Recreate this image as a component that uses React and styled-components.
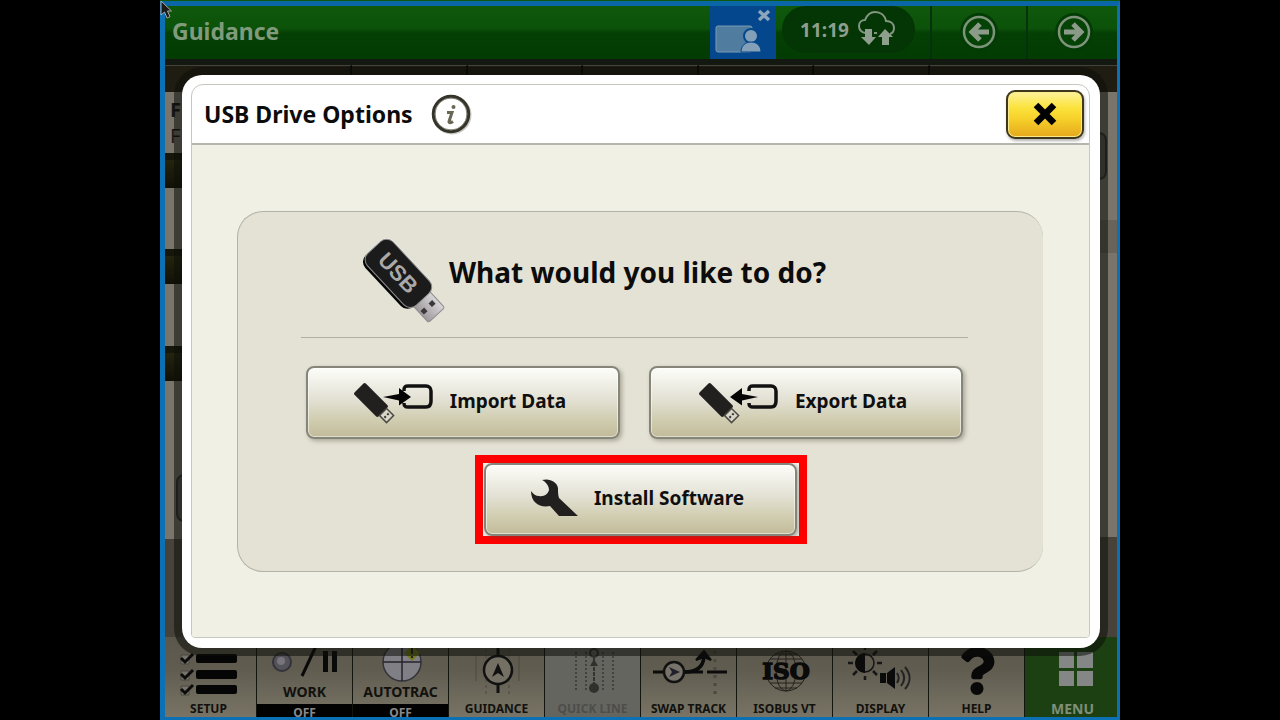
import React from 'react'
import styled, { createGlobalStyle } from 'styled-components'
import { FaQuestion } from 'react-icons/fa'

const GlobalStyle = createGlobalStyle`
    * {
        box-sizing: border-box;
    }

    body {
        margin: 0;
        background: #000;
        font-family: "Noto Sans", "Open Sans", sans-serif;
    }

    button {
        font-family: inherit;
        margin: 0;
        padding: 0;
        border: 0;
        background: none;
        color: inherit;
        cursor: pointer;
    }

    svg {
        display: block;
        flex: none;
    }
`;

/* icons */

const CursorIcon = () => (
    <svg width="14" height="20" viewBox="0 0 14 20">
        <path d="M1 1v14l3.500-3 2.500 6 3-1.300-2.500-5.700h4z" fill="#1a1a1a" stroke="#aaa" strokeWidth="1" />
    </svg>
)

const RemoteIcon = () => (
    <svg width="66" height="53" viewBox="0 0 66 53">
        <rect x="6" y="20" width="36" height="26" rx="2" fill="#4f7c9f" stroke="#7d9bb5" />
        <circle cx="41" cy="30" r="7" fill="#849fb8" stroke="#04478c" strokeWidth="2" />
        <path d="M31 46c0-6 4-10 10-10s10 4 10 10z" fill="#849fb8" stroke="#04478c" strokeWidth="1" />
        <path d="M49 5l10 9M59 5l-10 9" stroke="#8ba5bd" strokeWidth="3.500" />
    </svg>
)

const CloudIcon = () => (
    <svg width="40" height="38" viewBox="0 0 40 38">
        <path d="M8 22c-4-1-6-4-6-7 0-4 3-6 6-6 2-5 6-8 10-8 6 0 10 4 11 9 5 0 8 3 8 7 0 3-1 5-4 6M17 22h3" fill="none" stroke="#829680" strokeWidth="2" />
        <path d="M8 18h7v8h4l-7 8-8-8h4z" fill="#8f9f8d" />
        <path d="M25 34h7v-8h4l-8-8-7 8h4z" fill="#8f9f8d" />
    </svg>
)

const ArrowIcon = ({ flip }) => (
    <svg width="44" height="44" viewBox="0 0 44 44">
        <circle cx="22" cy="21" r="19" fill="#033b05" />
        <circle cx="22" cy="21" r="15" fill="#044205" stroke="#7d947b" strokeWidth="2.500" />
        <path d={flip ? "M12 21h17M21 13l8 8-8 8" : "M32 21h-17M23 13l-8 8 8 8"} fill="none" stroke="#8b9a89" strokeWidth="5" />
    </svg>
)

const InfoIcon = () => (
    <svg width="42" height="42" viewBox="0 0 42 42">
        <circle cx="22" cy="22" r="18" fill="none" stroke="#c9c9c4" strokeWidth="3" />
        <circle cx="21" cy="21" r="17.500" fill="#fff" stroke="#35342a" strokeWidth="3.500" />
        <circle cx="21" cy="21" r="16" fill="none" stroke="#8b887a" strokeWidth="1" />
        <circle cx="23.500" cy="14" r="2" fill="#6b6755" />
        <path d="M17 19.500h5l-3 9c0 1.500 2 1.500 4 0" fill="none" stroke="#6b6755" strokeWidth="3" />
    </svg>
)

const CrossIcon = () => (
    <svg width="24" height="24" viewBox="0 0 24 24">
        <path d="M3 3l18 18M21 3l-18 18" stroke="#000" strokeWidth="6.500" />
    </svg>
)

const UsbIcon = () => (
    <svg width="86" height="90" viewBox="0 0 86 90">
        <defs>
            <linearGradient id="plug" x1="0" y1="0" x2="0" y2="1">
                <stop offset="0" stopColor="#d9d6d9" />
                <stop offset="1" stopColor="#9d999d" />
            </linearGradient>
        </defs>
        <g transform="translate(36 37) rotate(47)">
            <rect x="34" y="-12" width="23" height="22" rx="2" fill="url(#plug)" stroke="#8e8a8e" />
            <rect x="43" y="-8" width="5" height="5" fill="#3a383a" />
            <rect x="43" y="3" width="5" height="5" fill="#3a383a" />
            <rect x="-35" y="-17" width="70" height="36" rx="9" fill="#050505" />
            <rect x="-36" y="-20" width="72" height="35" rx="10" fill="#f4f4f0" />
            <rect x="-35" y="-19" width="71" height="35" rx="9" fill="#1b1b1b" stroke="#8e8e8e" strokeWidth="1" />
            <text x="0" y="6" textAnchor="middle" fontFamily="Liberation Sans" fontWeight="700" fontSize="22" fill="#aaa8a8">USB</text>
        </g>
    </svg>
)

const TransferIcon = ({ out }) => (
    <svg width="80" height="46" viewBox="0 -4 80 46">
        <g transform="translate(17 18) rotate(45)">
            <rect x="-17" y="-8" width="34" height="16" rx="2" fill="#221f1f" />
            <path d="M17-5h10v10h-10z" fill="#d8d6c8" stroke="#4c4a45" strokeWidth="1.500" />
            <path d="M21-2h2M21 2h2" stroke="#333" strokeWidth="2" />
        </g>
        <path d="M50 9v-1c0-3 1-4 4-4h18c3 0 5 2 5 5v10c0 4-2 6-5 6h-18c-3 0-4-1-4-4" fill="none" stroke="#111" strokeWidth="3.500" />
        {out
            ? <path d="M31 15l12-9v6l16 3-16 3.500v5z" fill="#050505" />
            : <path d="M57 15l-12-9v6l-16 3 16 3.500v5z" fill="#050505" />}
    </svg>
)

const WrenchIcon = () => (
    <svg width="48" height="38" viewBox="0 0 48 38">
        <path d="M12 1C20-1 27 3 28 9C28 13 28 16 29 19L48 37H29L20 27C10 29 1 24 1 12C3 15 6 17 9 17C14 18 18 15 19 11C19 7 16 3 12 1z" fill="#221f1f" />
    </svg>
)

const SetupIcon = () => (
    <svg width="96" height="64" viewBox="0 0 96 64">
        {[17, 33, 48].map(y => (
            <g key={y}>
                <rect x="35" y={y} width="41" height="9" rx="2" fill="#050505" />
                <path d={`M20 ${y + 1}h8v9h-8z`} fill="#77736a" stroke="#4b483f" />
                <path d={`M20 ${y + 4}l4 4 8-8`} fill="none" stroke="#0c0c0c" strokeWidth="3" />
            </g>
        ))}
    </svg>
)

const WorkIcon = () => (
    <svg width="96" height="47" viewBox="0 0 96 47">
        <circle cx="25" cy="25" r="9" fill="#55535a" stroke="#34323a" strokeWidth="2" />
        <circle cx="24" cy="24" r="4" fill="#77757b" />
        <path d="M45 39l14-30" stroke="#090909" strokeWidth="3" />
        <path d="M66 14h5v21h-5zM75 14h5v21h-5z" fill="#090909" />
    </svg>
)

const AutotracIcon = () => (
    <svg width="96" height="47" viewBox="0 0 96 47">
        <circle cx="49" cy="25" r="19" fill="#807f86" stroke="#34343a" strokeWidth="1.500" />
        <path d="M49 6v38M30 25h38" stroke="#25252c" strokeWidth="1.500" />
        <path d="M59 8l8 8-8 8-8-8z" fill="#74781a" />
        <path d="M59 11v6M59 19v2" stroke="#222" strokeWidth="2" />
    </svg>
)

const GuidanceIcon = () => (
    <svg width="96" height="64" viewBox="0 0 96 64">
        <path d="M27 18v26M70 18v26" stroke="#4b483f" />
        <path d="M37 12v46M60 12v46" stroke="#4b483f" strokeDasharray="3 3" />
        <path d="M49 8v48" stroke="#111" strokeWidth="3" />
        <circle cx="49" cy="33" r="14" fill="#747064" stroke="#111" strokeWidth="2.500" />
        <path d="M49 26l6 14-6-4-6 4z" fill="#111" />
    </svg>
)

const QuickLineIcon = () => (
    <svg width="96" height="64" viewBox="0 0 96 64">
        <path d="M31 15v38M41 15v38M58 15v38M68 15v38" stroke="#42423e" strokeWidth="2" strokeDasharray="2 2" />
        <path d="M49 20v28" stroke="#35352f" strokeWidth="2" strokeDasharray="4 1" />
        <circle cx="49" cy="16" r="4" fill="none" stroke="#30302c" strokeWidth="2" />
        <path d="M49 22l4 7h-8z" fill="#30302c" />
        <circle cx="49" cy="51" r="5" fill="#30302c" />
    </svg>
)

const SwapTrackIcon = () => (
    <svg width="96" height="64" viewBox="0 0 96 64">
        <path d="M12 35h50M66 35h20" stroke="#0b0b0b" strokeWidth="3" />
        <path d="M44 35c11 0 18-5 19-15" fill="none" stroke="#0b0b0b" strokeWidth="3.500" />
        <path d="M55 23l8-9 7 9-7-3z" fill="#0b0b0b" stroke="#0b0b0b" strokeWidth="2" />
        <path d="M74 14v44" stroke="#4b483f" strokeWidth="3" strokeDasharray="3 5" />
        <circle cx="33" cy="35" r="10" fill="#77736a" stroke="#111" strokeWidth="2.500" />
        <path d="M28 30l11 5-11 5 3-5z" fill="#20202c" />
    </svg>
)

const IsoIcon = () => (
    <svg width="96" height="64" viewBox="0 0 96 64">
        <g fill="none" stroke="#24221d" strokeWidth="1">
            <circle cx="49" cy="34" r="20" />
            <ellipse cx="49" cy="34" rx="10" ry="20" />
            <path d="M49 14v40M33 22h32M33 46h32M38 17h22M38 51h22" />
        </g>
        <text x="49" y="42" textAnchor="middle" fontFamily="DejaVu Serif" fontWeight="700" fontSize="23" fill="#0a0a0a" stroke="#0a0a0a" strokeWidth="1.500">ISO</text>
    </svg>
)

const DisplayIcon = () => (
    <svg width="96" height="64" viewBox="0 0 96 64">
        <circle cx="32" cy="26" r="9" fill="none" stroke="#161616" strokeWidth="1.500" />
        <path d="M32 16a10 10 0 0 0 0 20z" fill="#0b0b0b" />
        <path d="M32 8v5M32 39v4M15 26h5M44 26h5M20 14l4 4M44 14l-4 4M20 38l4-4M44 38l-4-4" stroke="#161616" strokeWidth="2.500" />
        <path d="M47 36h6v10h-6zM54 36l8-6v22l-8-6z" fill="#0b0b0b" />
        <path d="M64 36c2 3 2 7 0 10M68 33c4 5 4 11 0 16M72 30c6 7 6 15 0 22" fill="none" stroke="#222" strokeWidth="2" />
    </svg>
)

const HelpIcon = () => (
    <svg width="96" height="64" viewBox="0 0 96 64">
        <FaQuestion x="24" y="10" size={48} color="#080808" />
    </svg>
)

const MenuIcon = () => (
    <svg width="96" height="64" viewBox="0 0 96 64">
        <path d="M34 15h15v16h-15zM52 15h16v16h-16zM34 34h15v15h-15zM52 34h16v15h-16z" fill="#858787" />
    </svg>
)

/* data */

const dockItems = [
    { label: 'SETUP', Icon: SetupIcon },
    { label: 'WORK', Icon: WorkIcon, status: 'OFF' },
    { label: 'AUTOTRAC', Icon: AutotracIcon, status: 'OFF' },
    { label: 'GUIDANCE', Icon: GuidanceIcon },
    { label: 'QUICK LINE', Icon: QuickLineIcon, disabled: true },
    { label: 'SWAP TRACK', Icon: SwapTrackIcon },
    { label: 'ISOBUS VT', Icon: IsoIcon },
    { label: 'DISPLAY', Icon: DisplayIcon },
    { label: 'HELP', Icon: HelpIcon },
    { label: 'MENU', Icon: MenuIcon, menu: true },
]

const DockItem = ({ item }) => {
    const { label, Icon, status, disabled, menu } = item

    return (
        <DockButton disabled={disabled} $menu={menu}>
            <Icon />
            <DockLabel $large={status || menu} $faded={disabled} $menu={menu}>{label}</DockLabel>
            {status && <DockStatus>{status}</DockStatus>}
        </DockButton>
    )
}

const OptionsDialog = () => (
    <Dialog role="dialog" aria-labelledby="dialog-title">
        <DialogInner>
            <DialogHeader>
                <DialogTitle id="dialog-title">USB Drive Options</DialogTitle>
                <button aria-label="Information"><InfoIcon /></button>
                <CloseButton aria-label="Close"><CrossIcon /></CloseButton>
            </DialogHeader>
            <DialogBody>
                <Panel>
                    <Question>
                        <UsbIcon />
                        <QuestionText>What would you like to do?</QuestionText>
                    </Question>
                    <ButtonRow>
                        <OptionButton><TransferIcon />Import Data</OptionButton>
                        <OptionButton><TransferIcon out />Export Data</OptionButton>
                    </ButtonRow>
                    <Highlight>
                        <OptionButton><WrenchIcon />Install Software</OptionButton>
                    </Highlight>
                </Panel>
            </DialogBody>
        </DialogInner>
    </Dialog>
)

const App = () => (
    <>
        <GlobalStyle />
        <Screen>
            <TopBar>
                <PageTitle>Guidance</PageTitle>
                <RemoteButton aria-label="Remote display"><RemoteIcon /></RemoteButton>
                <Clock>11:19<CloudIcon /></Clock>
                <NavButton aria-label="Back"><ArrowIcon /></NavButton>
                <NavButton aria-label="Forward"><ArrowIcon flip /></NavButton>
            </TopBar>
            <Workspace>
                <TabStrip>
                    <Tab /><Tab /><Tab /><Tab /><Tab /><Tab /><Tab />
                </TabStrip>
                <Columns>
                    <div>
                        <Card $size={61}><b>F</b><span>F</span></Card>
                        <Band />
                        <Card $size={61} />
                        <Band />
                        <Card $size={62} />
                        <Band />
                        <Card $size={158}><CardButton $side="left" /></Card>
                    </div>
                    <div>
                        <Card $size={128}><CardButton $side="right" /></Card>
                        <Band $light />
                        <Card $size={284} />
                    </div>
                </Columns>
            </Workspace>
            <Dock>
                {dockItems.map(item => <DockItem key={item.label} item={item} />)}
            </Dock>
            <OptionsDialog />
            <Pointer><CursorIcon /></Pointer>
        </Screen>
    </>
)

export default App

const Screen = styled.div`
    position: relative;
    display: flex;
    flex-direction: column;
    width: 75%;
    min-height: 100vh;
    margin: 0 auto;
    background: #47433a;
    overflow: hidden;

    &::after {
        content: "";
        position: absolute;
        inset: 1px 0 0;
        border: solid #0c70b4;
        border-width: 5px 3px 3px 5px;
        border-top-color: #0b66a6;
        pointer-events: none;
    }
`;

const TopBar = styled.header`
    display: grid;
    grid-template-columns: 1fr 66px 154px 96px 94px;
    height: 59px;
    padding-top: 6px;
    background: linear-gradient(#0f5a0c, #0c520a 48%, #043f04 56%, #033c03);
`;

const PageTitle = styled.h1`
    margin: 0;
    padding-left: 12px;
    font-size: 23px;
    line-height: 50px;
    color: #809b7b;
`;

const RemoteButton = styled.button`
    background: #04478c;
`;

const Clock = styled.div`
    display: flex;
    align-items: center;
    justify-content: center;
    gap: 8px;
    height: 47px;
    margin: 0 15px 0 6px;
    border-radius: 24px;
    background: #043505;
    font-size: 19px;
    font-weight: 700;
    color: #8f9f8d;
`;

const NavButton = styled.button`
    display: flex;
    align-items: center;
    justify-content: center;
    border-left: 2px solid #02330a;
`;

const Workspace = styled.main`
    flex: 1;
`;

const TabStrip = styled.div`
    display: grid;
    grid-template-columns: 192px 1fr 1fr 1fr 1fr 1fr 190px;
    height: 33px;
    padding-top: 6px;
    background: #131911;
`;

const Tab = styled.div`
    border-top: 1px solid #45433a;
    border-right: 2px solid #050704;
    background: #1f1d12;
`;

const Columns = styled.div`
    display: grid;
    grid-template-columns: 1fr 1fr;
`;

const Card = styled.section`
    display: flex;
    flex-direction: column;
    justify-content: center;
    height: ${props => props.$size}px;
    padding-left: 10px;
    background: #79756a;
    font-size: 20px;
    line-height: 26px;
    color: #161616;
`;

const CardButton = styled.div`
    align-self: ${props => props.$side === 'left' ? 'flex-start' : 'flex-end'};
    width: 80px;
    height: 48px;
    margin: ${props => props.$side === 'left' ? '76px 0 0 6px' : '0 13px 0 0'};
    border: 2px solid #333333;
    border-radius: 8px;
    background: #5b5953;
`;

const Band = styled.div`
    height: ${props => props.$light ? 33 : 35}px;
    border-top: ${props => props.$light ? 0 : 7}px solid #15170a;
    background: ${props => props.$light ? '#68645a' : 'linear-gradient(#25240e, #111006)'};
`;

const Dock = styled.nav`
    display: grid;
    grid-template-columns: repeat(10, 1fr);
    height: 83px;
`;

const DockButton = styled.button`
    display: flex;
    flex-direction: column;
    align-items: center;
    min-width: 0;
    overflow: hidden;
    border-left: 1px solid #15150f;
    background: ${props => props.$menu ? '#1d4012' : props.disabled ? '#656560' : 'linear-gradient(#5b574c, #605c50 40%, #7a7566)'};
`;

const DockLabel = styled.span`
    font-size: ${props => props.$large ? 14 : 12}px;
    font-weight: 700;
    line-height: 16px;
    white-space: nowrap;
    color: ${props => props.$menu ? '#7f8f79' : props.$faded ? '#4d4d4a' : '#11110e'};
`;

const DockStatus = styled.span`
    align-self: stretch;
    height: 16px;
    margin-top: 4px;
    background: #020202;
    font-size: 12px;
    font-weight: 700;
    line-height: 18px;
    color: #87888a;
`;

const Dialog = styled.div`
    position: absolute;
    inset: 75px 20px 72px 22px;
    display: flex;
    padding: 9px 10px 10px 9px;
    border-radius: 20px;
    background: #fff;
    box-shadow: 0 0 0 8px rgba(12, 14, 10, 0.55);
`;

const DialogInner = styled.div`
    flex: 1;
    display: flex;
    flex-direction: column;
    border: 1px solid #c6c7be;
    border-radius: 12px 12px 4px 4px;
    overflow: hidden;
`;

const DialogHeader = styled.div`
    display: flex;
    align-items: center;
    gap: 17px;
    height: 60px;
    padding: 0 5px 0 12px;
    border-bottom: 2px solid #b5b6ae;
`;

const DialogTitle = styled.h2`
    margin: 0;
    font-size: 23px;
    line-height: 32px;
    color: #0c0c0c;
`;

const CloseButton = styled.button`
    display: flex;
    align-items: center;
    justify-content: center;
    width: 78px;
    height: 49px;
    margin-left: auto;
    border: 2px solid #3e371c;
    border-radius: 9px;
    background: linear-gradient(#fdf29a, #fbe33c 35%, #f6d02a 60%, #e5a81c);
    box-shadow: inset 0 0 0 1px #f8ea8c, 1px 2px 3px rgba(0, 0, 0, 0.3);
`;

const DialogBody = styled.div`
    flex: 1;
    display: flex;
    align-items: center;
    padding: 0 46px 0 45px;
    background: #f0f1e4;
`;

const Panel = styled.div`
    flex: 1;
    min-height: 361px;
    padding: 25px 0 26px;
    border: 1px solid #b3b3a8;
    border-right: 0;
    border-radius: 26px;
    background: #e4e2d4;
`;

const Question = styled.div`
    display: flex;
    gap: 2px;
    height: 101px;
    margin: 0 75px 28px 63px;
    padding-left: 60px;
    border-bottom: 1px solid #b0afa3;
`;

const QuestionText = styled.h3`
    margin: 0;
    font-size: 28px;
    line-height: 70px;
    color: #0c0c0c;
`;

const ButtonRow = styled.div`
    display: flex;
    justify-content: center;
    gap: 29px;
    margin: 0 75px 16px 63px;
`;

const OptionButton = styled.button`
    flex: 0 1 314px;
    display: flex;
    align-items: center;
    justify-content: center;
    gap: 16px;
    height: 73px;
    padding: 0 6px 2px 0;
    border: 2px solid #85857a;
    border-radius: 8px;
    background: linear-gradient(#fdfdf9, #e3e1d4 45%, #d0cdb0 75%, #c2bb9a);
    box-shadow: inset 0 0 0 1px rgba(255, 255, 255, 0.5), 2px 2px 4px rgba(80, 78, 60, 0.4);
    font-size: 19px;
    font-weight: 700;
    color: #0f0f0f;
`;

const Highlight = styled.div`
    display: flex;
    width: 332px;
    margin: 0 auto;
    padding: 0 2px 0 1px;
    border: 8px solid #fe0000;
    background: #f3f2ec;

    ${OptionButton} {
        flex: 1;
    }
`;

const Pointer = styled.div`
    position: absolute;
    top: 0;
    left: 0;
    z-index: 1;
`;
